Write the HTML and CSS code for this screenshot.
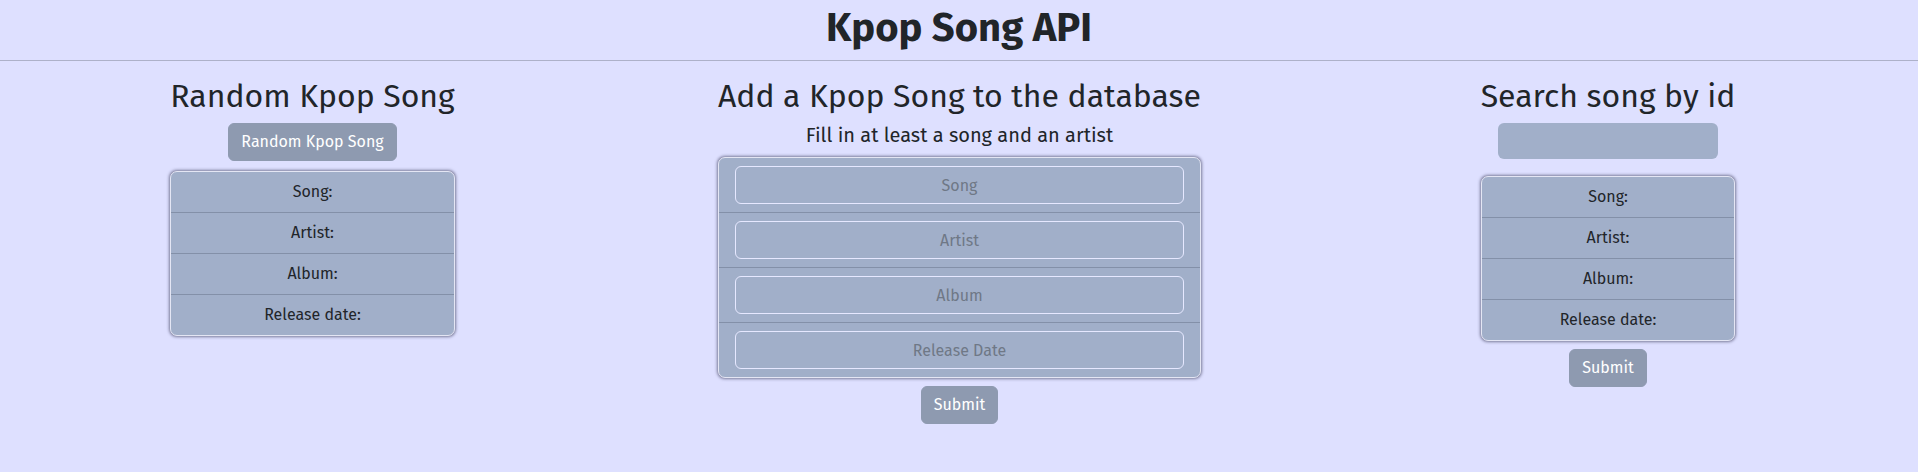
FILE: index.html
```html
<!DOCTYPE html>
<html lang="en">
<head>
<meta charset="utf-8">
<title>Kpop Song API</title>
<link rel="stylesheet" href="styles.css">
</head>
<body>
<header class="site-header">
  <h1 class="site-title">Kpop Song API</h1>
</header>
<main class="page">
  <div class="row">
    <section class="col">
      <div class="panel">
        <h2 class="panel-title">Random Kpop Song</h2>
        <button class="btn btn-random" type="button">Random Kpop Song</button>
        <ul class="info-card info-card-left">
          <li class="info-row">Song:</li>
          <li class="info-row">Artist:</li>
          <li class="info-row">Album:</li>
          <li class="info-row">Release date:</li>
        </ul>
      </div>
    </section>
    <section class="col">
      <div class="panel">
        <h2 class="panel-title">Add a Kpop Song to the database</h2>
        <h5 class="panel-sub">Fill in at least a song and an artist</h5>
        <form class="form-card">
          <div class="form-row"><input class="field" type="text" placeholder="Song"></div>
          <div class="form-row"><input class="field" type="text" placeholder="Artist"></div>
          <div class="form-row"><input class="field" type="text" placeholder="Album"></div>
          <div class="form-row"><input class="field" type="text" placeholder="Release Date"></div>
        </form>
        <button class="btn btn-submit" type="button">Submit</button>
      </div>
    </section>
    <section class="col">
      <div class="panel">
        <h2 class="panel-title">Search song by id</h2>
        <input class="search-field" type="text">
        <ul class="info-card info-card-right">
          <li class="info-row">Song:</li>
          <li class="info-row">Artist:</li>
          <li class="info-row">Album:</li>
          <li class="info-row">Release date:</li>
        </ul>
        <button class="btn btn-submit" type="button">Submit</button>
      </div>
    </section>
  </div>
</main>
</body>
</html>
```
FILE: styles.css
```css
* { box-sizing: border-box; }

html, body {
  margin: 0;
  padding: 0;
  overflow-x: hidden;
}

body {
  background: #dee0ff;
  color: #212529;
  font-family: "Fira Sans", "Open Sans", "Noto Sans", sans-serif;
  font-size: 16px;
  line-height: 1.5;
  min-height: 472px;
}

.site-header {
  padding-top: 4px;
  border-bottom: 1px solid #adb1c9;
  text-align: center;
}

.site-title {
  margin: 0 0 8px;
  font-size: 40px;
  font-weight: 700;
  line-height: 1.2;
}

.page {
  padding-top: 16px;
}

.row {
  display: grid;
  grid-template-columns: 647px 647px 1fr;
  margin: 0 -15px 0 -11px;
}

.col {
  padding: 0 12px;
  display: flex;
  justify-content: center;
  min-width: 0;
}

.panel {
  width: max-content;
  display: flex;
  flex-direction: column;
  align-items: center;
}

.panel-title {
  margin: 0 0 8px;
  font-size: 32px;
  font-weight: 400;
  line-height: 1.2;
}

.panel-sub {
  margin: 0 0 10px;
  font-size: 20px;
  font-weight: 400;
  line-height: 1.2;
}

.btn {
  font-family: inherit;
  font-size: 16px;
  font-weight: 400;
  line-height: 24px;
  color: #ffffff;
  background: #8e9ab0;
  border: 1px solid #8e9ab0;
  border-radius: 6px;
  padding: 6px 12px;
  cursor: pointer;
}

.btn-random {
  margin-bottom: 10px;
}

.btn-submit {
  margin-top: 8px;
}

.info-card,
.form-card {
  align-self: stretch;
  margin: 0;
  padding: 0;
  list-style: none;
  background: #a1afc9;
  border: 1px solid #e4e6f4;
  border-radius: 7px;
  box-shadow: 0 0 3px 1px rgba(40, 40, 70, 0.55);
  overflow: hidden;
}

.info-row {
  padding: 8px 16px;
  text-align: center;
  line-height: 24px;
  border-top: 1px solid #8390a8;
}

.info-row:first-child {
  border-top: 0;
}

.form-row {
  padding: 8px 16px;
  border-top: 1px solid #8390a8;
}

.form-row:first-child {
  border-top: 0;
}

.field {
  display: block;
  width: 100%;
  height: 38px;
  padding: 6px 12px;
  font-family: inherit;
  font-size: 16px;
  line-height: 24px;
  text-align: center;
  color: #212529;
  background: #a1afc9;
  border: 1px solid #e6e8ff;
  border-radius: 6px;
  outline: none;
}

.field::placeholder {
  color: #6f7886;
  opacity: 1;
}

.search-field {
  display: block;
  width: 220px;
  height: 36px;
  margin: 0 0 17px;
  padding: 6px 12px;
  font-family: inherit;
  font-size: 16px;
  background: #a1afc9;
  border: 0;
  border-radius: 6px;
  outline: none;
}
```
